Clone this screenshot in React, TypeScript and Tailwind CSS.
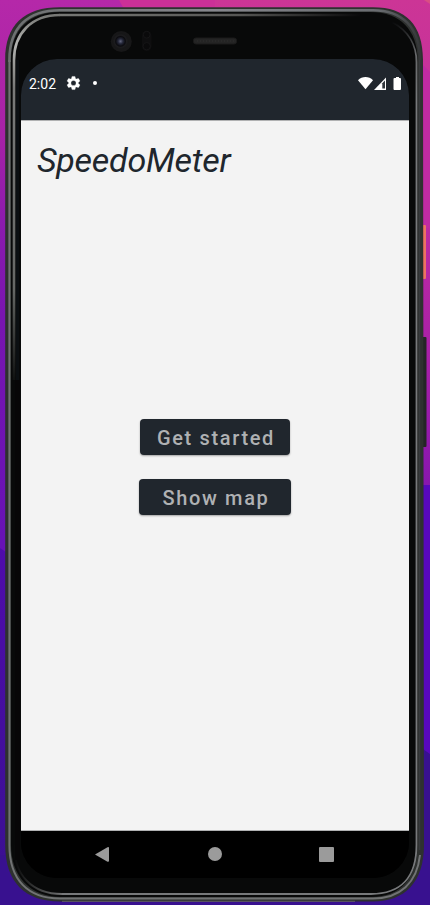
import React from "react";

function Wallpaper() {
  return (
    <svg className="absolute inset-0" width="430" height="905" viewBox="0 0 430 905" aria-hidden="true">
      <defs>
        <linearGradient id="wallLeft" x1="0" y1="0" x2="0" y2="1">
          <stop offset="0" stopColor="#b528a9" />
          <stop offset="0.15" stopColor="#a722a6" />
          <stop offset="0.24" stopColor="#8d1bad" />
          <stop offset="0.35" stopColor="#7815b0" />
          <stop offset="0.6" stopColor="#6712b5" />
        </linearGradient>
        <linearGradient id="wallRight" x1="0" y1="0" x2="0" y2="1">
          <stop offset="0" stopColor="#cc3596" />
          <stop offset="0.23" stopColor="#bf2ca0" />
          <stop offset="0.4" stopColor="#a81fa8" />
          <stop offset="0.54" stopColor="#8716ae" />
        </linearGradient>
        <linearGradient id="wallLow" x1="0" y1="0" x2="0" y2="1">
          <stop offset="0" stopColor="#4f0cab" />
          <stop offset="1" stopColor="#39108f" />
        </linearGradient>
      </defs>
      <rect width="215" height="905" fill="url(#wallLeft)" />
      <rect x="215" width="215" height="905" fill="url(#wallRight)" />
      <path d="M119 0H215V20H130Z" fill="#cb3098" />
      <path d="M420 62L430 72V228H420Z" fill="#c02ba2" />
      <path d="M424 0H430V4Z" fill="#d94f83" />
      <path d="M0 548L12 556V905H0Z" fill="url(#wallLow)" />
      <rect x="215" y="485" width="215" height="420" fill="#5808bd" />
      <path d="M420 747L430 754V905H0V855H420Z" fill="#38118f" />
      <rect x="422" y="225" width="4" height="54" rx="1" fill="#ed7261" />
    </svg>
  );
}

function PhoneBody() {
  return (
    <svg className="absolute inset-0" width="430" height="905" viewBox="0 0 430 905" aria-hidden="true">
      <defs>
        <linearGradient id="rimTop" gradientUnits="userSpaceOnUse" x1="8" y1="0" x2="420" y2="0">
          <stop offset="0" stopColor="#6c6f70" />
          <stop offset="0.5" stopColor="#85868c" />
          <stop offset="0.9" stopColor="#696c70" />
          <stop offset="1" stopColor="#343638" />
        </linearGradient>
        <linearGradient id="innerLeft" x1="0" y1="0" x2="0" y2="1">
          <stop offset="0" stopColor="#777875" />
          <stop offset="0.08" stopColor="#b4b5b2" />
          <stop offset="0.2" stopColor="#797a79" />
          <stop offset="0.75" stopColor="#666866" />
          <stop offset="1" stopColor="#101211" />
        </linearGradient>
        <linearGradient id="innerTop" x1="0" y1="0" x2="1" y2="0">
          <stop offset="0" stopColor="#777875" />
          <stop offset="0.6" stopColor="#565654" />
          <stop offset="1" stopColor="#0a0a0b" />
        </linearGradient>
        <linearGradient id="innerRight" gradientUnits="userSpaceOnUse" x1="0" y1="22" x2="0" y2="100">
          <stop offset="0" stopColor="#08090a" />
          <stop offset="0.4" stopColor="#66686a" />
          <stop offset="1" stopColor="#77797b" />
        </linearGradient>
        <linearGradient id="innerCorner" gradientUnits="userSpaceOnUse" x1="14" y1="0" x2="62" y2="0">
          <stop offset="0" stopColor="#080909" />
          <stop offset="1" stopColor="#717273" />
        </linearGradient>
        <radialGradient id="lens">
          <stop offset="0" stopColor="#62657d" />
          <stop offset="0.3" stopColor="#25283a" />
          <stop offset="0.6" stopColor="#0b0b0f" />
          <stop offset="0.75" stopColor="#1c1c1e" />
          <stop offset="1" stopColor="#151516" />
        </radialGradient>
      </defs>
      <rect x="422" y="337" width="4.5" height="110" rx="1" fill="#242526" />
      <path d="M5.2 60C5.2 25 24 7.3 60 7.3H373C406 7.3 423 25 423 60L424 845C424 882 405 901.5 373 901.5H60C25 901.5 5.2 882 5.2 845Z" fill="#2e312f" />
      <path d="M11 60C11 29 30 12 60 12H370C400 12 417.5 30 417.5 60V845C417.5 877 401 897 371 897H61C30 897 11 876 11 845Z" fill="#080909" />
      <path d="M9.4 62V60C9.4 27 28 10.2 60 10.2H373C402 10.2 420 27 420 60" fill="none" stroke="url(#rimTop)" strokeWidth="2.5" />
      <path d="M9.4 60V845C9.4 880 28 898.5 60 898.5H373C400 898.5 417 883 420 855" fill="none" stroke="#717374" strokeWidth="2" />
      <path d="M14 380V60C14 34 31 15 60 15" fill="none" stroke="url(#innerLeft)" strokeWidth="2.6" />
      <path d="M59.5 13.8H360V16.2H59.5Z" fill="url(#innerTop)" />
      <path d="M392 22C409 31 416.5 46 416.5 62V845C416.5 877 401 894 371 894H62" fill="none" stroke="url(#innerRight)" strokeWidth="1.8" />
      <path d="M62 894C32 894 14 875 14 845" fill="none" stroke="url(#innerCorner)" strokeWidth="1.8" />
      <path d="M419.5 60V850" stroke="#383b3d" strokeWidth="1.5" />
      <path d="M62 901.3H355" stroke="#5f6061" strokeWidth="1" />
      <path d="M17.5 60V380" stroke="#0b0f12" strokeWidth="3" />
      <path d="M17.5 380V860" stroke="#070607" strokeWidth="5" />
      <circle cx="121.3" cy="41.5" r="10.5" fill="#171718" />
      <circle cx="120.5" cy="41.3" r="8" fill="url(#lens)" />
      <rect x="142" y="31" width="9.5" height="20" rx="4.5" fill="#0e0e0f" />
      <circle cx="146.7" cy="34.7" r="3.4" fill="#0a0a0b" stroke="#151516" />
      <circle cx="146.7" cy="46.2" r="3.7" fill="#0a0a0b" stroke="#151516" />
      <rect x="193.5" y="38" width="43" height="6" rx="2.5" fill="#242424" stroke="#1b1b1b" />
      <path d="M197 41H234" stroke="#292929" strokeWidth="2" strokeDasharray="1 2" />
    </svg>
  );
}

function StatusBar() {
  return (
    <header className="flex h-[61px] shrink-0 items-start bg-[#20262d] pt-[17px] text-white">
      <span className="ml-2 w-[37px] text-[14px] leading-4">2:02</span>
      <svg className="-mt-px" width="15" height="16" viewBox="1 1 22 22" fill="currentColor" aria-hidden="true">
        <path d="M19.14 12.94c.04-.3.06-.61.06-.94s-.02-.64-.07-.94l2.03-1.58a.49.49 0 0 0 .12-.61l-1.92-3.32a.49.49 0 0 0-.59-.22l-2.39.96c-.5-.38-1.03-.7-1.62-.94l-.36-2.54a.48.48 0 0 0-.48-.41h-3.84c-.24 0-.43.17-.47.41l-.36 2.54c-.59.24-1.13.57-1.62.94l-2.39-.96a.48.48 0 0 0-.59.22L2.74 8.87c-.12.21-.08.47.12.61l2.03 1.58c-.05.3-.09.63-.09.94s.02.64.07.94l-2.03 1.58a.49.49 0 0 0-.12.61l1.92 3.32c.12.22.37.29.59.22l2.39-.96c.5.38 1.03.7 1.62.94l.36 2.54c.05.24.24.41.48.41h3.84c.24 0 .44-.17.47-.41l.36-2.54c.59-.24 1.13-.56 1.62-.94l2.39.96c.22.08.47 0 .59-.22l1.92-3.32a.48.48 0 0 0-.12-.61zM12 15.8A3.8 3.8 0 1 1 12 8.2a3.8 3.8 0 0 1 0 7.6z" stroke="currentColor" strokeWidth=".5" />
      </svg>
      <span className="mt-[5px] ml-3 size-1 rounded-full bg-white" />
      <svg className="mr-2 ml-auto" width="43" height="14" viewBox="0 0 43 14" fill="currentColor" aria-hidden="true">
        <path d="M0 4.3C4 0 11 0 15 4.3L7.5 13.3Z" />
        <path d="M28 1.5V14H16Z" />
        <path d="M24.3 7.2L27 4.5V12.5H24.3Z" fill="#30363c" />
        <path d="M35.5 3q0-1 1-1H38V1h3v1h1q1 0 1 1V13q0 1-1 1H36.5q-1 0-1-1Z" />
      </svg>
    </header>
  );
}

function ActionButton({ children, className }: { children: React.ReactNode; className: string }) {
  return (
    <button className={`h-9 rounded bg-[#20262d] pt-0.5 pl-0.5 text-[20px] leading-[34px] font-medium tracking-[1.65px] text-[#afb1b3] shadow-[0_1px_2px_#0005] ${className}`}>
      {children}
    </button>
  );
}

function NavBar() {
  return (
    <nav className="flex h-[47px] shrink-0 items-start bg-black pt-4 text-[#9b9b9b]">
      <button aria-label="Back" className="ml-[74px]">
        <svg width="14" height="15" viewBox="0 0 14 15"><path d="M0 7.5L12.5.3Q14-.3 14 1V14Q14 15 12.5 14.7Z" fill="currentColor" /></svg>
      </button>
      <button aria-label="Home" className="ml-[99px] size-[14px] rounded-full bg-current" />
      <button aria-label="Recents" className="ml-[97px] size-[15px] rounded-[1px] bg-current" />
    </nav>
  );
}

export default function App() {
  return (
    <div className="relative h-[905px] w-[430px] overflow-hidden pt-[59px] pl-[21px] font-[Roboto,sans-serif]">
      <Wallpaper />
      <PhoneBody />
      <div className="relative flex h-[819px] w-[388px] flex-col overflow-hidden rounded-[36px] bg-black">
        <StatusBar />
        <main className="flex min-h-0 flex-1 flex-col items-center border-y border-[#b0b1b2] bg-[#f3f3f3]">
          <h1 className="mt-[19px] self-start pl-4 text-[34px] leading-10 tracking-[-0.25px] text-[#20262d] italic">SpeedoMeter</h1>
          <ActionButton className="mt-[239px] w-[150px]">Get started</ActionButton>
          <ActionButton className="mt-[24px] w-[152px]">Show map</ActionButton>
        </main>
        <NavBar />
      </div>
    </div>
  );
}
